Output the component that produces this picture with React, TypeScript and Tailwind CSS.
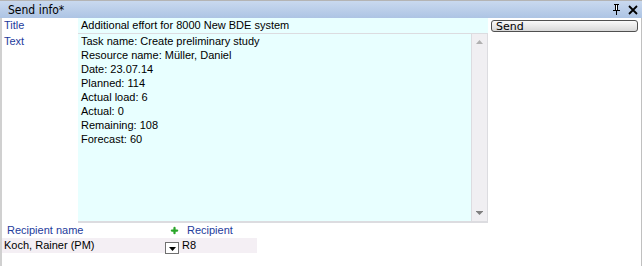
import { Plus } from "lucide-react";

const lines = [
  "Task name: Create preliminary study",
  "Resource name: Müller, Daniel",
  "Date: 23.07.14",
  "Planned: 114",
  "Actual load: 6",
  "Actual: 0",
  "Remaining: 108",
  "Forecast: 60",
];

function PinIcon() {
  return (
    <svg width="9" height="11" viewBox="0 0 9 11" className="block">
      <path d="M2 0h5v1H6v5h2v1H5v4H4V7H1V6h2V1H2z" fill="#000" />
      <path d="M4 1h1v5H4z" fill="#fff" />
    </svg>
  );
}

function CloseIcon() {
  return (
    <svg width="10" height="10" viewBox="0 0 10 10" className="block">
      <path d="M1 1L9 9M9 1L1 9" stroke="#000" strokeWidth="1.8" />
    </svg>
  );
}

export default function App() {
  return (
    <div className="h-[266px] w-[642px] overflow-hidden bg-white font-['Liberation_Sans',Arial,sans-serif] text-[11px] text-black">
      {/* caption */}
      <div className="flex h-[18px] items-center border-t border-[#b4b4b4] bg-gradient-to-b from-[#c9d9ef] to-[#adc4e4] pl-[8px] pr-[4px]">
        <span className="font-['DejaVu_Sans_Condensed','DejaVu_Sans',sans-serif] text-[12px] leading-none text-black">
          Send info*
        </span>
        <div className="ml-auto flex items-center gap-[7px]">
          <PinIcon />
          <CloseIcon />
        </div>
      </div>

      <div className="flex h-[248px] border-l-2 border-r border-l-[#d0d0d0] border-r-[#c0c0c0]">
        <div className="flex w-[639px] flex-col">
          <div className="flex">
            <div className="flex w-[76px] flex-col pl-[2px] leading-[14px] text-[#1e3c9c]">
              <span className="h-[15px]">Title</span>
              <span className="pt-[1px]">Text</span>
            </div>
            <div className="flex w-[410px] flex-col">
              <div className="h-[15px] bg-[#e8ffff] pl-[3px] leading-[14px]">
                Additional effort for 8000 New BDE system
              </div>
              <div className="flex h-[190px] border-t border-b-2 border-r border-[#dcdce0] bg-[#e8ffff]">
                <div className="flex-1 pl-[3px] leading-[14px]">
                  {lines.map((l) => (
                    <div key={l}>{l}</div>
                  ))}
                </div>
                <div className="flex w-[16px] flex-col items-center justify-between border-l border-[#dcdce0] bg-[#f0eff2] py-[6px]">
                  <svg width="7" height="4" viewBox="0 0 7 4">
                    <path d="M3.5 0L7 4H0z" fill="#b0b0b0" />
                  </svg>
                  <svg width="7" height="4" viewBox="0 0 7 4">
                    <path d="M0 0h7v1H0zM0.5 1h6L3.5 4z" fill="#808080" />
                  </svg>
                </div>
              </div>
            </div>
            <div className="flex-1 pl-[3px] pt-[2px] pr-[3px]">
              <button
                type="button"
                className="flex h-[12px] w-full items-center rounded-[3px] border border-[#505050] bg-gradient-to-b from-[#fafafa] to-[#d8d8d8] pl-[4px] font-['DejaVu_Sans',sans-serif] text-[11px] leading-none text-black"
              >
                Send
              </button>
            </div>
          </div>

          <div className="mt-[1px] flex h-[13px] items-center text-[#1e3c9c]">
            <span className="w-[168px] pl-[5px]">Recipient name</span>
            <Plus className="h-[9px] w-[9px] text-[#2aa62a]" strokeWidth={6} />
            <span className="ml-[8px]">Recipient</span>
          </div>
          <div className="mt-[1px] flex h-[15px] w-[255px] items-center bg-[#f4eff4]">
            <span className="w-[163px] pl-[2px]">Koch, Rainer (PM)</span>
            <div className="mt-[4px] flex h-[12px] w-[14px] items-end justify-center border border-[#707070] bg-white pb-[2px]">
              <svg width="7" height="4" viewBox="0 0 7 4">
                <path d="M0 0h7L3.5 4z" fill="#000" />
              </svg>
            </div>
            <span className="ml-[3px]">R8</span>
          </div>
        </div>
      </div>
    </div>
  );
}
